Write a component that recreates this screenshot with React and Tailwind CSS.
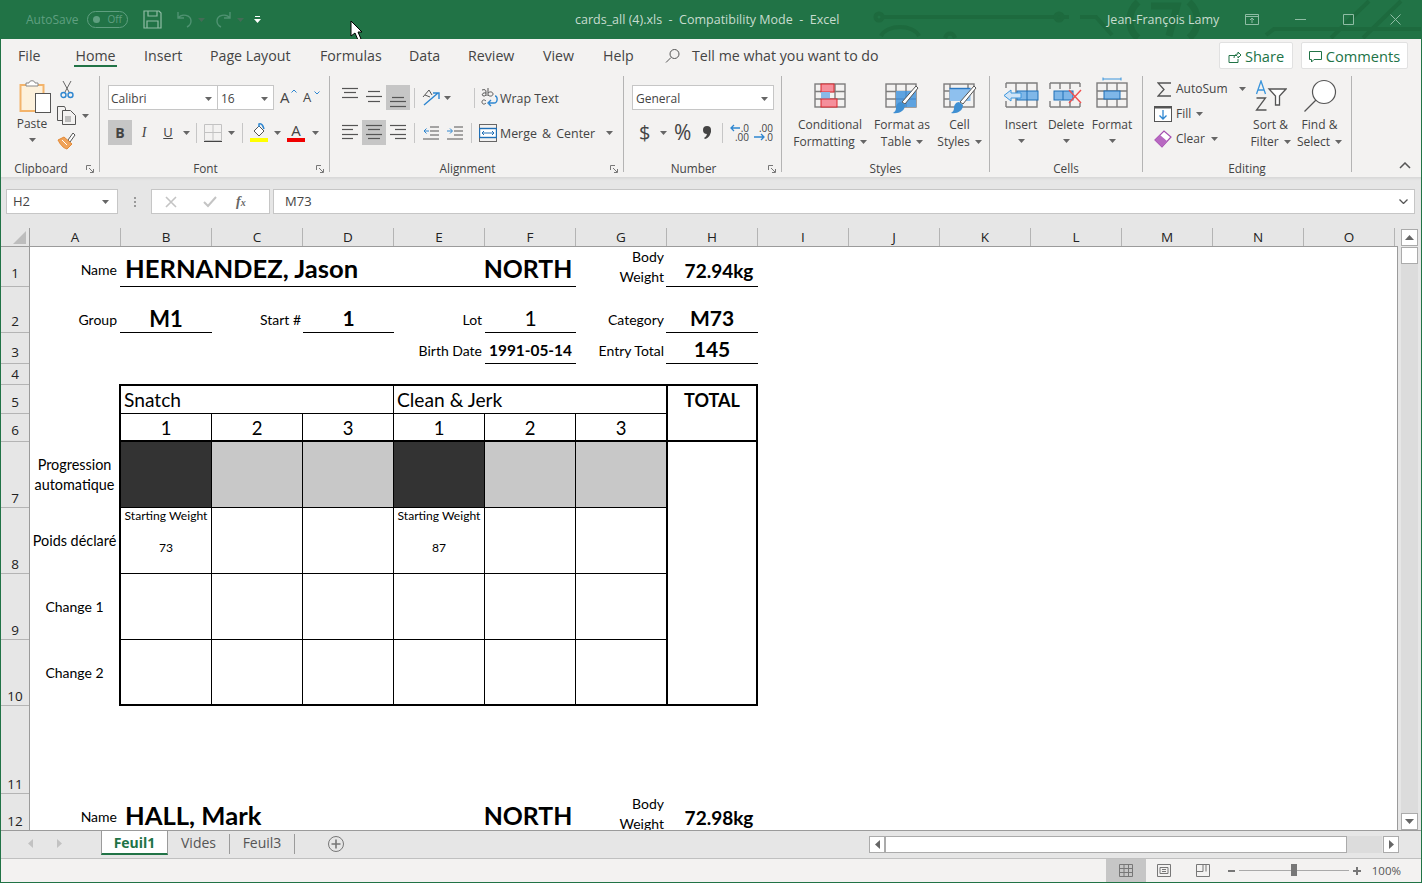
import React from 'react'

// small dropdown triangle used all over the ribbon
function Caret({ className = '' }) {
  return (
    <svg width="7" height="4" viewBox="0 0 7 4" className={'shrink-0 ' + className}>
      <path d="M0 0h7L3.5 4z" fill="#666" />
    </svg>
  )
}

function Launcher() {
  return (
    <svg width="8" height="8" viewBox="0 0 8 8">
      <path d="M.5 5V.5H5M3 3l4 4M7.5 4v3.5H4" fill="none" stroke="#777" />
    </svg>
  )
}

function Lines({ lines, w = 16, h = 25 }) {
  return (
    <svg width={w} height={h} viewBox={`0 0 ${w} ${h}`} className="shrink-0">
      {lines.map(([a, b, y], i) => (
        <path key={i} d={`M${a} ${y + 0.5}H${b}`} stroke="#555" strokeWidth="1.2" />
      ))}
    </svg>
  )
}

function Group({ width, label, launcher, children }) {
  return (
    <div className={'mt-1 h-[96px] flex flex-col border-r border-[#b4b4b4] shrink-0 ' + width}>
      <div className="flex-1 min-h-0 flex">{children}</div>
      <div className={'h-[12px] relative flex justify-center text-[11.8px] leading-[16px] text-[#444] ' + (launcher ? 'pr-[18px]' : '')}>
        {label}
        {launcher && (
          <span className="absolute right-[5px] top-[5px]">
            <Launcher />
          </span>
        )}
      </div>
    </div>
  )
}

// big ribbon button: icon, two text lines
function BigBtn({ icon, top, bottom, w, pt, caretOwnLine }) {
  return (
    <div className={'flex flex-col items-center shrink-0 ' + w}>
      <div className={'h-[41px] flex items-start justify-center ' + pt}>{icon}</div>
      <div className="text-[12px] leading-[17px] text-[#444] whitespace-nowrap mt-[-1px]">{top}</div>
      {caretOwnLine ? (
        <Caret className="mt-[6px]" />
      ) : (
        <div className="text-[12px] leading-[17px] text-[#444] whitespace-nowrap flex items-center gap-[5px]">
          {bottom}
          <Caret />
        </div>
      )}
    </div>
  )
}

function PaintBrush() {
  return (
    <g>
      <path d="M31 3l2 2-13 16-3-2z" fill="#fff" stroke="#555" />
      <path d="M16 19l4 3c0 6-6 9-12 8 2-1 3-3 3-5 0-3 2-6 5-6z" fill="#3f8fd2" />
    </g>
  )
}

function TableGrid() {
  return (
    <g fill="none" stroke="#7d7d7d" strokeWidth="1.4">
      <rect x="1" y="1" width="30" height="23" />
      <path d="M1 8.5h30M1 16h30M11 1v23M21 1v23" />
    </g>
  )
}

function CondFormatIcon() {
  return (
    <svg width="32" height="26" viewBox="0 0 32 26">
      <TableGrid />
      <rect x="7" y="1" width="13" height="8" fill="#f58f9b" stroke="#d9262c" />
      <rect x="7" y="9" width="9" height="7" fill="#8ab9e8" />
      <rect x="7" y="16" width="16" height="8" fill="#f58f9b" stroke="#d9262c" />
    </svg>
  )
}

function FormatTableIcon() {
  return (
    <svg width="34" height="31" viewBox="0 0 34 31">
      <TableGrid />
      <rect x="11" y="8" width="20" height="16" fill="#5ea3e0" />
      <path d="M21 8v16M11 16h20" stroke="#3f82c4" />
      <PaintBrush />
    </svg>
  )
}

function CellStylesIcon() {
  return (
    <svg width="34" height="31" viewBox="0 0 34 31">
      <g fill="none" stroke="#7d7d7d" strokeWidth="1.4">
        <rect x="1" y="1" width="30" height="23" />
        <path d="M1 8h6M25 8h6M1 16h6M7 1v23M25 1v6" />
      </g>
      <rect x="6.5" y="5" width="21" height="13" fill="#8ec0ee" />
      <path d="M6.5 5.500h21" stroke="#2b78c2" strokeWidth="1.4" />
      <PaintBrush />
    </svg>
  )
}

function InsertIcon() {
  return (
    <svg width="36" height="28" viewBox="0 0 36 28">
      <g fill="none" stroke="#7d7d7d" strokeWidth="1.4">
        <path d="M3 2h31v24H3M3 2v5M3 20v6M13 2v24M24 2v24" />
      </g>
      <rect x="14" y="10" width="21" height="9" fill="#7fb7e8" stroke="#1f6fb6" />
      <path d="M24 10v9" stroke="#1f6fb6" />
      <path d="M1 14.5L8 9v3h10v5H8v3z" fill="#cfe4f7" stroke="#3a95dc" />
    </svg>
  )
}

function DeleteIcon() {
  return (
    <svg width="34" height="28" viewBox="0 0 34 28">
      <g fill="none" stroke="#7d7d7d" strokeWidth="1.4">
        <path d="M1 2h30M1 26h30M1 2v6M1 20v6M11 2v6M11 20v6M21 2v6M21 20v6M31 2v4M31 22v4" />
      </g>
      <rect x="5" y="10" width="19" height="9" fill="#7fb7e8" stroke="#1f6fb6" />
      <path d="M14 10v9" stroke="#1f6fb6" />
      <path d="M20 9l12 13M32 9L20 22" stroke="#f0504f" strokeWidth="1.4" />
    </svg>
  )
}

function FormatIcon() {
  return (
    <svg width="32" height="32" viewBox="0 0 32 32">
      <path d="M7 2h18M7 .5v3M25 .5v3" stroke="#3a95dc" fill="none" />
      <g fill="none" stroke="#7d7d7d" strokeWidth="1.4">
        <rect x="1" y="6" width="30" height="24" />
        <path d="M1 14h30M1 22h30M11 6v24M21 6v24" />
      </g>
      <rect x="8" y="14" width="16" height="8" fill="#7fb7e8" stroke="#1f6fb6" />
    </svg>
  )
}

function SortIcon() {
  return (
    <svg width="32" height="32" viewBox="0 0 32 32">
      <path d="M1.5 14L6 1l4.5 13M3 10h6" fill="none" stroke="#3a95dc" strokeWidth="1.3" />
      <path d="M1.5 18h9l-9 12h10" fill="none" stroke="#555" strokeWidth="1.3" />
      <path d="M14 9h17l-6.5 7v9h-4v-9z" fill="#fff" stroke="#555" strokeWidth="1.3" />
    </svg>
  )
}

function FindIcon() {
  return (
    <svg width="34" height="34" viewBox="0 0 34 34">
      <circle cx="21" cy="13" r="11.5" fill="#fff" stroke="#555" strokeWidth="1.2" />
      <path d="M13 21L1.5 32.5" stroke="#555" strokeWidth="1.3" />
    </svg>
  )
}

function TitleBar() {
  return (
    <div className="relative h-[39px] shrink-0 bg-[#217346] overflow-hidden flex items-center text-[12.5px] font-['Open_Sans',sans-serif]">
      {/* faded circuit pattern behind the title */}
      <svg className="absolute left-0 top-0" width="1422" height="39" viewBox="0 0 1422 39" fill="none" stroke="#1d6a3e" strokeWidth="4">
        <circle cx="878" cy="17" r="3.5" />
        <path d="M882 17h186M1079 17h16l16 18" />
        <circle cx="1058" cy="17" r="3.5" />
        <path d="M880 36c6-12 32-12 38 0M944 38c2-6 8-6 10 0" />
        <path d="M1137 2c-11 10-11 27 0 36M1188 2c11 10 11 27 0 36M1150 6h26l-8 30" strokeWidth="7" />
        <path d="M1265 35l8-6h150M1330 38l38-37M1362 38l38-37" />
      </svg>
      <span className="relative ml-[25px] w-[61px] text-[#5f9f80] text-[12px]">AutoSave</span>
      <span className="relative w-[41px] h-[17px] rounded-full border border-[#5f9f80] flex items-center justify-between pl-[5px] pr-[5px] text-[10px] text-[#5f9f80]">
        <span className="w-[7px] h-[7px] rounded-full bg-[#5f9f80]" />
        Off
      </span>
      <svg className="relative ml-[15px]" width="19" height="19" viewBox="0 0 19 19" fill="none" stroke="#8fbca4" strokeWidth="1.2">
        <path d="M1 1h15l2 2v15H1zM5 1v5h9V1M4 18v-7h11v7" />
      </svg>
      <svg className="relative ml-[14px]" width="17" height="17" viewBox="0 0 17 17" fill="none" stroke="#4f9272" strokeWidth="1.4">
        <path d="M2 1v6h6M2 7c4-5 13-3 13 3 0 3-2 5-4 6" />
      </svg>
      <Caret className="relative ml-[5px] opacity-50" />
      <svg className="relative ml-[10px]" width="17" height="17" viewBox="0 0 17 17" fill="none" stroke="#4f9272" strokeWidth="1.4">
        <path d="M15 1v6H9M15 7C11 2 2 4 2 10c0 3 2 5 4 6" />
      </svg>
      <Caret className="relative ml-[5px] opacity-50" />
      <svg className="relative ml-[10px]" width="7" height="8" viewBox="0 0 7 8" fill="#fff">
        <path d="M1 0h5v1H1zM0 3h7L3.5 7z" />
      </svg>
      <span className="relative ml-[314px] w-[300px] whitespace-pre text-[#c7dccf] pt-px">cards_all (4).xls  -  Compatibility Mode  -  Excel</span>
      <span className="relative ml-[232px] text-[#c7dccf] pt-px">Jean-François Lamy</span>
      <svg className="relative ml-[26px]" width="14" height="11" viewBox="0 0 14 11" fill="none" stroke="#8fbca4">
        <path d="M.5.5h13v10H.5zM.5 2.5h13M7 9V4.5M5 6l2-2 2 2" />
      </svg>
      <svg className="relative ml-[36px]" width="11" height="11" viewBox="0 0 11 11" fill="none" stroke="#8fbca4">
        <path d="M0 5.5h11" />
      </svg>
      <svg className="relative ml-[37px]" width="11" height="11" viewBox="0 0 11 11" fill="none" stroke="#8fbca4">
        <path d="M.5.5h10v10H.5z" />
      </svg>
      <svg className="relative ml-[36px]" width="11" height="11" viewBox="0 0 11 11" fill="none" stroke="#8fbca4">
        <path d="M.5.5l10 10M10.5.5l-10 10" />
      </svg>
      {/* mouse pointer */}
      <svg className="absolute left-[349px] top-[20px]" width="13" height="21" viewBox="0 0 13 21">
        <path d="M1 1v15l4-3 3 7 3-1-3-7h4z" fill="#fff" stroke="#000" />
      </svg>
    </div>
  )
}

function MenuTabs() {
  const items = [
    ['Insert', 'w-[66px]'],
    ['Page Layout', 'w-[110px]'],
    ['Formulas', 'w-[89px]'],
    ['Data', 'w-[59px]'],
    ['Review', 'w-[75px]'],
    ['View', 'w-[60px]'],
    ['Help', 'w-[61px]'],
  ]
  return (
    <div className="h-[33px] shrink-0 bg-[#f3f2f1] flex text-[14.2px] text-[#444] leading-[33px]">
      <span className="w-[59px] pl-[17px]">File</span>
      <span className="relative w-[43px] ml-[14px] mr-[27px] text-center">
        Home
        <span className="absolute left-0 right-0 bottom-[5px] h-[2px] bg-[#217346]" />
      </span>
      {items.map(([t, w]) => (
        <span key={t} className={w}>{t}</span>
      ))}
      <span className="flex items-center">
        <svg width="16" height="16" viewBox="0 0 16 16" fill="none" stroke="#555" className="ml-[1px] mr-[11px]">
          <circle cx="9.5" cy="6" r="4.5" />
          <path d="M6 9.5L1 14.5" />
        </svg>
        Tell me what you want to do
      </span>
      <span className="ml-auto mt-[3px] mb-[3px] w-[74px] h-[27px] bg-white border border-[#e1e1e1] rounded-[2px] flex items-center justify-center gap-[4px] text-[#217346] text-[14.6px] leading-none pt-px">
        <svg width="13" height="13" viewBox="0 0 13 13" fill="none" stroke="#217346">
          <path d="M9 5.5H1v7h9V9M6 8c0-3 2-4 4-4V2l3 3-3 3V6" />
        </svg>
        Share
      </span>
      <span className="ml-[8px] mr-[13px] mt-[3px] mb-[3px] w-[107px] h-[27px] bg-white border border-[#e1e1e1] rounded-[2px] flex items-center justify-center gap-[4px] text-[#217346] text-[14.6px] leading-none pt-px">
        <svg width="13" height="13" viewBox="0 0 13 13" fill="none" stroke="#217346">
          <path d="M.5 1.5h12v8H5L2.5 12V9.5h-2z" />
        </svg>
        Comments
      </span>
    </div>
  )
}

function Ribbon() {
  return (
    <div className="h-[105px] shrink-0 bg-[#f3f2f1] flex text-[#444] relative">
      <Group width="w-[99px]" label="Clipboard" launcher>
        <div className="ml-[13px] w-[36px] flex flex-col items-center">
          <svg width="32" height="33" viewBox="0 0 32 33" className="mt-[4px] ml-[5px]">
            <rect x="1.5" y="5" width="23" height="26" fill="#fdf1dc" stroke="#f3b46c" strokeWidth="2" />
            <path d="M7 6V3h3c0-3 6-3 6 0h3v3z" fill="#fff" stroke="#888" />
            <rect x="16.5" y="13.5" width="15" height="19" fill="#fff" stroke="#555" />
          </svg>
          <span className="text-[12px] leading-[17px] mt-[2px]">Paste</span>
          <Caret className="mt-[6px]" />
        </div>
        <div className="ml-[7px] flex flex-col">
          <svg width="14" height="19" viewBox="0 0 14 19" className="ml-[3px] mt-[4px]" fill="none">
            <path d="M3 1l6 11M11 1L5 12" stroke="#666" />
            <circle cx="3.5" cy="15" r="2.5" stroke="#2e86d0" strokeWidth="1.4" />
            <circle cx="10.5" cy="15" r="2.5" stroke="#2e86d0" strokeWidth="1.4" />
          </svg>
          <div className="flex items-center mt-[7px]">
            <svg width="19" height="19" viewBox="0 0 19 19" fill="none" stroke="#555">
              <path d="M5.5 14.5h-5V.5h7l1 2v2" />
              <path d="M5.5 4.5h8l5 5v9h-13z" fill="#f3f2f1" />
              <path d="M8 11h6M8 13h6M8 15h6" stroke="#888" />
            </svg>
            <Caret className="ml-[6px]" />
          </div>
          <svg width="19" height="18" viewBox="0 0 19 18" className="mt-[7px]">
            <path d="M11 8l5-7 2 2-5 7z" fill="#fff" stroke="#555" />
            <path d="M1 8l6-3 8 7-5 5C6 16 3 12 1 8z" fill="#f0a35a" stroke="#e48a35" />
            <path d="M5 8l5 5" stroke="#fff" />
          </svg>
        </div>
      </Group>

      <Group width="w-[230px]" label="Font" launcher>
        <div className="ml-[8px] flex flex-col">
          <div className="flex items-center h-[25px] mt-[9px]">
            <div className="w-[110px] h-full bg-white border border-[#c6c6c6] flex items-center justify-between pl-[2px] pr-[5px] pt-[2px] text-[12px]">
              Calibri
              <Caret />
            </div>
            <div className="w-[56px] h-full bg-white border-y border-r border-[#c6c6c6] flex items-center justify-between pl-[3px] pr-[5px] pt-[2px] text-[12px]">
              16
              <Caret />
            </div>
            <span className="ml-[6px] text-[15px] relative w-[17px]">
              A
              <svg className="absolute right-0 top-[3px]" width="6" height="4" viewBox="0 0 6 4" fill="none" stroke="#2e86d0"><path d="M.5 3.5L3 1l2.500 2.500" /></svg>
            </span>
            <span className="ml-[6px] text-[13px] relative w-[17px]">
              A
              <svg className="absolute right-0 top-[3px]" width="6" height="4" viewBox="0 0 6 4" fill="none" stroke="#2e86d0"><path d="M.5.5L3 3l2.500-2.500" /></svg>
            </span>
          </div>
          <div className="flex items-center h-[25px] mt-[10px]">
            <span className="w-[24px] h-full bg-[#c6c6c6] flex items-center justify-center font-bold text-[14px]">B</span>
            <span className="w-[24px] text-center text-[14px] italic font-['Liberation_Serif',serif]">I</span>
            <span className="w-[24px] text-center text-[13px] underline">U</span>
            <Caret className="ml-[3px]" />
            <span className="w-px h-[20px] ml-[6px] bg-[#c6c6c6]" />
            <svg width="18" height="18" viewBox="0 0 18 18" className="ml-[7px]" fill="none">
              <path d="M.5.5h17v16H.5zM9 .5v16M.5 8.500h17" stroke="#c2c2c2" />
              <path d="M0 17.500h18" stroke="#444" />
            </svg>
            <Caret className="ml-[6px]" />
            <span className="w-px h-[20px] ml-[7px] bg-[#c6c6c6]" />
            <div className="ml-[7px] w-[18px] flex flex-col items-center">
              <svg width="14" height="14" viewBox="0 0 14 14">
                <path d="M2 8l5-5 5 5-5 5z" fill="#fff" stroke="#555" />
                <path d="M7 4V1c3-1 4 2 5 5" fill="none" stroke="#2e86d0" strokeWidth="1.5" />
              </svg>
              <span className="w-[18px] h-[4px] mt-px bg-[#ffff00]" />
            </div>
            <Caret className="ml-[6px]" />
            <div className="ml-[6px] w-[18px] flex flex-col items-center">
              <span className="text-[15px] leading-[14px] h-[15px]">A</span>
              <span className="w-[18px] h-[4px] bg-[#f00000]" />
            </div>
            <Caret className="ml-[7px]" />
          </div>
        </div>
      </Group>

      <Group width="w-[294px]" label="Alignment" launcher>
        <div className="ml-[12px] flex flex-col">
          <div className="flex items-center h-[25px] mt-[9px]">
            <Lines lines={[[0, 16, 3], [2, 14, 7], [0, 16, 12]]} />
            <span className="w-[8px]" />
            <Lines lines={[[2, 14, 6], [0, 16, 11], [2, 14, 16]]} />
            <span className="ml-[4px] w-[24px] h-full bg-[#c6c6c6] flex items-center justify-center">
              <Lines lines={[[2, 14, 12], [0, 16, 16], [0, 16, 21]]} />
            </span>
            <span className="w-px h-[20px] ml-[4px] bg-[#c6c6c6]" />
            <svg width="19" height="18" viewBox="0 0 19 18" fill="none" className="ml-[7px]">
              <path d="M1 8l6-7 3 5M3 6l5 2M10 9l-3 3" stroke="#555" />
              <path d="M2 16L16 4M11 4h6v6" stroke="#2e86d0" strokeWidth="1.4" />
            </svg>
            <Caret className="ml-[3px]" />
            <span className="w-px h-[20px] ml-[23px] bg-[#c6c6c6]" />
            <svg width="18" height="20" viewBox="0 0 18 20" className="ml-[6px]" fill="none">
              <path d="M1 2c3-1 4 0 4 2v4M5 5C1 4 0 8 3 8c1 0 2-1 2-1M7 0v8M7 5c2-2 5-1 5 1s-3 3-5 1M5 13c-2-2-4-1-4 1s2 3 4 1" stroke="#555" />
              <path d="M14 8c3 0 3 7-1 7H8M10 12l-3 3 3 3" stroke="#2e86d0" strokeWidth="1.4" />
            </svg>
            <span className="text-[12.4px] ml-[1px] pt-[3px] whitespace-nowrap">Wrap Text</span>
          </div>
          <div className="flex items-center h-[25px] mt-[10px]">
            <Lines lines={[[0, 16, 5], [0, 11, 9], [0, 16, 14], [0, 11, 18]]} />
            <span className="ml-[4px] w-[24px] h-full bg-[#c6c6c6] flex items-center justify-center">
              <Lines lines={[[0, 16, 5], [2, 14, 9], [0, 16, 14], [2, 14, 18]]} />
            </span>
            <span className="ml-[4px]">
              <Lines lines={[[0, 16, 5], [5, 16, 9], [0, 16, 14], [5, 16, 18]]} />
            </span>
            <span className="w-px h-[20px] ml-[8px] bg-[#c6c6c6]" />
            <svg width="16" height="16" viewBox="0 0 16 16" fill="none" className="ml-[8px]">
              <path d="M7 2h9M7 6h9M7 10h9M0 14h16" stroke="#555" />
              <path d="M6 6H1M3.500 3.500L1 6l2.500 2.500" stroke="#2e86d0" />
            </svg>
            <svg width="16" height="16" viewBox="0 0 16 16" fill="none" className="ml-[8px]">
              <path d="M7 2h9M7 6h9M7 10h9M0 14h16" stroke="#555" />
              <path d="M0 6h5M3 3.500L5.500 6 3 8.500" stroke="#2e86d0" />
            </svg>
            <span className="w-px h-[20px] ml-[8px] bg-[#c6c6c6]" />
            <svg width="18" height="18" viewBox="0 0 18 18" fill="none" className="ml-[7px]">
              <rect x=".5" y=".5" width="17" height="17" stroke="#666" />
              <rect x=".5" y="4.500" width="17" height="9" fill="#fff" stroke="#1f6fb6" strokeWidth="1.4" />
              <path d="M3 9h12M5 7L3 9l2 2M13 7l2 2-2 2" stroke="#1f6fb6" />
            </svg>
            <span className="text-[12.4px] [word-spacing:2px] ml-[3px] pt-[3px] whitespace-nowrap">Merge &amp; Center</span>
            <Caret className="ml-[11px]" />
          </div>
        </div>
      </Group>

      <Group width="w-[158px]" label="Number" launcher>
        <div className="ml-[8px] flex flex-col">
          <div className="w-[142px] h-[25px] mt-[9px] bg-white border border-[#c6c6c6] flex items-center justify-between pl-[3px] pr-[5px] pt-[2px] text-[12px]">
            General
            <Caret />
          </div>
          <div className="flex items-center h-[25px] mt-[10px]">
            <span className="ml-[7px] w-[11px] text-[20px] leading-none text-center">$</span>
            <Caret className="ml-[10px]" />
            <span className="ml-[7px] w-[17px] text-[21px] leading-none text-center">%</span>
            <svg width="10" height="15" viewBox="0 0 10 15" className="ml-[11px]" fill="#444">
              <circle cx="5" cy="5" r="4" />
              <path d="M9 5c0 4-2 8-6 9l-1-1c2-1 3-3 3-5z" />
            </svg>
            <span className="w-px h-[20px] ml-[10px] bg-[#c6c6c6]" />
            <span className="ml-[7px] w-[19px] relative h-[17px] text-[10px] leading-[9px] text-right">
              <svg className="absolute left-0 top-0" width="10" height="8" viewBox="0 0 10 8" fill="none" stroke="#2e86d0" strokeWidth="1.3"><path d="M10 4H1M4 1L1 4l3 3" /></svg>
              .0<br />.00
            </span>
            <span className="ml-[5px] w-[19px] relative h-[17px] text-[10px] leading-[9px] text-right">
              <svg className="absolute left-0 bottom-0" width="12" height="8" viewBox="0 0 12 8" fill="none" stroke="#2e86d0" strokeWidth="1.3"><path d="M0 4h10M7 1l3 3-3 3" /></svg>
              .00<br />.0
            </span>
          </div>
        </div>
      </Group>

      <Group width="w-[208px]" label="Styles">
        <BigBtn w="w-[96px]" pt="pt-[7px]" icon={<CondFormatIcon />} top="Conditional" bottom="Formatting" />
        <BigBtn w="w-[48px]" pt="pt-[7px]" icon={<FormatTableIcon />} top="Format as" bottom="Table" />
        <BigBtn w="w-[64px] pl-[3px]" pt="pt-[7px]" icon={<CellStylesIcon />} top="Cell" bottom="Styles" />
      </Group>

      <Group width="w-[153px]" label="Cells">
        <BigBtn w="w-[54px] ml-[4px]" pt="pt-[5px]" icon={<InsertIcon />} top="Insert" caretOwnLine />
        <BigBtn w="w-[36px]" pt="pt-[5px]" icon={<DeleteIcon />} top="Delete" caretOwnLine />
        <BigBtn w="w-[56px]" pt="pt-[1px]" icon={<FormatIcon />} top="Format" caretOwnLine />
      </Group>

      <Group width="w-[209px]" label="Editing">
        <div className="ml-[11px] w-[93px] flex flex-col text-[12px]">
          <div className="h-[24px] mt-[1px] flex items-center">
            <svg width="15" height="15" viewBox="0 0 15 15" fill="none" className="ml-[3px]" stroke="#555" strokeWidth="1.3">
              <path d="M14 1H1l6 6.500L1 14h13" />
            </svg>
            <span className="ml-[4px]">AutoSum</span>
            <Caret className="ml-[11px]" />
          </div>
          <div className="h-[25px] flex items-center">
            <svg width="18" height="16" viewBox="0 0 18 16" fill="none">
              <rect x=".5" y=".5" width="17" height="15" fill="#fff" stroke="#555" />
              <path d="M.5 1.500h17" stroke="#555" strokeWidth="2" />
              <path d="M9 4v9M5.500 9.500L9 13l3.500-3.500" stroke="#2e86d0" strokeWidth="1.3" />
            </svg>
            <span className="ml-[4px]">Fill</span>
            <Caret className="ml-[5px]" />
          </div>
          <div className="h-[25px] flex items-center">
            <svg width="18" height="18" viewBox="0 0 18 18">
              <path d="M1 10l9-9 7 6-9 10z" fill="#fff" stroke="#a54db0" strokeWidth="1.2" />
              <path d="M1 10l5-5 7 6-5 6z" fill="#b768c1" />
            </svg>
            <span className="ml-[4px]">Clear</span>
            <Caret className="ml-[6px]" />
          </div>
        </div>
        <BigBtn w="w-[47px]" pt="pt-[4px]" icon={<SortIcon />} top="Sort &" bottom="Filter" />
        <BigBtn w="w-[51px]" pt="pt-[3px]" icon={<FindIcon />} top="Find &" bottom="Select" />
      </Group>

      <svg className="absolute right-[10px] bottom-[8px]" width="12" height="7" viewBox="0 0 12 7" fill="none" stroke="#555" strokeWidth="1.5">
        <path d="M1 6l5-5 5 5" />
      </svg>
    </div>
  )
}

function FormulaBar() {
  return (
    <div className="h-[51px] shrink-0 bg-[#e6e6e6] pt-[12px] shadow-[inset_0_3px_2px_-1px_#d9d9d9]">
      <div className="h-[25px] flex text-[13px] text-[#444]">
        <div className="ml-[5px] w-[112px] bg-white border border-[#c6c6c6] flex items-center justify-between pl-[6px] pr-[8px]">
          H2
          <Caret />
        </div>
        <div className="w-[33px] flex flex-col items-center justify-center gap-[2px]">
          <span className="w-[2px] h-[2px] bg-[#999]" />
          <span className="w-[2px] h-[2px] bg-[#999]" />
          <span className="w-[2px] h-[2px] bg-[#999]" />
        </div>
        <div className="w-[119px] bg-white border border-[#c6c6c6] flex items-center">
          <svg width="12" height="12" viewBox="0 0 12 12" className="ml-[13px]" fill="none" stroke="#c4c4c4" strokeWidth="1.6">
            <path d="M1 1l10 10M11 1L1 11" />
          </svg>
          <svg width="14" height="12" viewBox="0 0 14 12" className="ml-[26px]" fill="none" stroke="#c4c4c4" strokeWidth="2">
            <path d="M1 6l4 4 8-9" />
          </svg>
          <span className="ml-[19px] text-[14px] font-bold italic text-[#666] font-['Liberation_Serif',serif]">f<span className="text-[10px]">x</span></span>
        </div>
        <div className="ml-[3px] w-[1142px] bg-white border border-[#c6c6c6] flex items-center justify-between pl-[11px] pr-[6px]">
          M73
          <svg width="9" height="5" viewBox="0 0 9 5" fill="none" stroke="#555" strokeWidth="1.3"><path d="M.5.500l4 4 4-4" /></svg>
        </div>
      </div>
    </div>
  )
}

const columns = ['B', 'C', 'D', 'E', 'F', 'G', 'H', 'I', 'J', 'K', 'L', 'M', 'N', 'O']

function ColumnHeader() {
  return (
    <div className="h-[19px] shrink-0 flex bg-[#e6e6e6] border-b border-[#9b9b9b] text-[13.5px] leading-[18px] text-[#222]">
      <div className="w-[29px] shrink-0 border-r border-[#9b9b9b] flex items-end justify-end pr-[3px] pb-[2px]">
        <svg width="13" height="13" viewBox="0 0 13 13"><path d="M13 0v13H0z" fill="#bdbdbd" /></svg>
      </div>
      <div className="w-[91px] shrink-0 text-center border-r border-[#b4b4b4]">A</div>
      {columns.map((c) => (
        <div key={c} className="w-[91px] shrink-0 text-center border-r border-[#b4b4b4]">{c}</div>
      ))}
    </div>
  )
}

function RowHeader() {
  const rows = [
    [1, 'h-[40px] pb-[4px]'], [2, 'h-[46px] pb-[2px]'], [3, 'h-[31px] pb-[2px]'], [4, 'h-[21px] pb-[1px]'], [5, 'h-[29px] pb-[2px]'], [6, 'h-[28px] pb-[2px]'],
    [7, 'h-[66px]'], [8, 'h-[66px]'], [9, 'h-[66px]'], [10, 'h-[66px]'], [11, 'h-[88px]'], [12, 'h-[40px] pb-[3px]'],
  ]
  return (
    <div className="w-[29px] shrink-0 bg-[#e6e6e6] border-r border-[#9b9b9b] text-[13.5px] text-[#222] overflow-hidden">
      {rows.map(([n, h]) => (
        <div key={n} className={'border-b border-[#b4b4b4] flex items-end justify-center leading-[18px] ' + h}>{n}</div>
      ))}
    </div>
  )
}

const lbl = 'flex items-center justify-end pr-[2px] text-[14px] text-black'
const big = 'flex items-center justify-center font-bold text-black'

function CardHead({ name, weight }) {
  return (
    <>
      <div className={lbl + ' pt-[5px] pr-[1px]'}>Name</div>
      <div className="col-span-4 ml-px border-b flex items-center pl-[5px] pt-[4px] font-bold text-[25.6px] whitespace-nowrap">{name}</div>
      <div className={big + ' border-b text-[24.8px] pt-[4px] pr-[5px]'}>NORTH</div>
      <div className="flex flex-col justify-center items-end pr-[2px] text-[14px] leading-[20px]">
        <span>Body</span>
        <span>Weight</span>
      </div>
      <div className={big + ' border-b text-[19px] pt-[9px] pl-[14px]'}>{weight}</div>
    </>
  )
}

const bodyCols = ['border-l-2 border-r', 'border-r', 'border-r', 'border-r', 'border-r', '']

function Attempts({ label, first, last, size = 'text-[14px]' }) {
  return (
    <>
      <div className={'flex items-center justify-center text-center leading-[20px] ' + size}>{label}</div>
      {bodyCols.map((c, i) => (
        <div key={i} className={c + ' flex flex-col items-center text-[12.1px] leading-[16px] whitespace-nowrap ' + (last ? 'border-b-2' : 'border-b')}>
          {first && (i === 0 || i === 3) && (
            <>
              <span>Starting Weight</span>
              <span className="h-[16px]" />
              <span>{i === 0 ? '73' : '87'}</span>
            </>
          )}
        </div>
      ))}
    </>
  )
}

function Sheet() {
  return (
    <div className="flex-1 min-w-0 overflow-hidden bg-white border-r border-[#9b9b9b] grid grid-cols-[89px_93px_91px_91px_91px_91px_90px_92px] grid-rows-[40px_46px_31px_20px_30px_26px_68px_66px_66px_66px_88px_40px] content-start justify-start text-black font-['Lato',sans-serif]">
      {/* row 1 */}
      <CardHead name="HERNANDEZ, Jason" weight="72.94kg" />

      {/* row 2 */}
      <div className={lbl + ' pt-[18px] pr-[1px]'}>Group</div>
      <div className={big + ' ml-px border-b text-[22px] pt-[17px]'}>M1</div>
      <div className={lbl + ' pt-[18px]'}>Start #</div>
      <div className={big + ' border-b text-[21px] pt-[16px]'}>1</div>
      <div className={lbl + ' pt-[18px] pr-[3px]'}>Lot</div>
      <div className="border-b flex items-center justify-center text-[21px] pt-[16px]">1</div>
      <div className={lbl + ' pt-[18px]'}>Category</div>
      <div className={big + ' border-b text-[21px] pt-[16px]'}>M73</div>

      {/* row 3 */}
      <div />
      <div />
      <div />
      <div />
      <div className={lbl + ' pt-[3px] pr-[3px]'}>Birth Date</div>
      <div className={big + ' border-b text-[15.4px] pt-[5px]'}>1991-05-14</div>
      <div className={lbl + ' pt-[3px]'}>Entry Total</div>
      <div className={big + ' border-b text-[21px] pt-[2px]'}>145</div>

      {/* row 4 */}
      <div className="col-span-8" />

      {/* rows 5 and 6 */}
      <div />
      <div className="col-span-3 border-l-2 border-t-2 border-b border-r flex items-center pl-[3px] text-[19.2px] pt-[2px]">Snatch</div>
      <div className="col-span-3 border-t-2 border-b flex items-center pl-[3px] text-[19.2px] pt-[2px]">Clean &amp; Jerk</div>
      <div className="row-span-2 border-l-2 border-r-2 border-t-2 text-center font-bold text-[18px] leading-[28px]">TOTAL</div>
      <div />
      {bodyCols.map((c, i) => (
        <div key={i} className={c + ' flex items-center justify-center text-[18.5px] pt-[3px]'}>{i % 3 + 1}</div>
      ))}

      {/* row 7 */}
      <div className="flex items-center justify-center text-center text-[14.4px] leading-[20px] pt-[2px]">
        Progression<br />automatique
      </div>
      {bodyCols.map((c, i) => (
        <div key={i} className={c + ' border-t-2 border-b ' + (i % 3 === 0 ? 'bg-[#333333]' : 'bg-[#c8c8c8]')} />
      ))}
      <div className="row-span-4 border-2" />

      {/* rows 8 to 10 */}
      <Attempts label="Poids déclaré" size="text-[14.4px]" first />
      <Attempts label="Change 1" />
      <Attempts label="Change 2" last />

      {/* row 11 */}
      <div className="col-span-8" />

      {/* row 12, cut by the tab bar */}
      <CardHead name="HALL, Mark" weight="72.98kg" />
    </div>
  )
}

function VScroll() {
  return (
    <div className="w-[23px] shrink-0 bg-[#e6e6e6] flex flex-col items-center pt-px">
      <div className="w-[17px] h-[17px] bg-white border border-[#ababab] flex items-center justify-center">
        <svg width="9" height="5" viewBox="0 0 9 5"><path d="M0 5h9L4.500 0z" fill="#666" /></svg>
      </div>
      <div className="w-[17px] h-[17px] bg-white border border-[#ababab] mt-px" />
      <div className="flex-1 w-[17px] bg-[#dcdcdc]" />
      <div className="w-[17px] h-[17px] bg-white border border-[#ababab]  flex items-center justify-center">
        <svg width="9" height="5" viewBox="0 0 9 5"><path d="M0 0h9L4.500 5z" fill="#666" /></svg>
      </div>
    </div>
  )
}

function TabBar() {
  return (
    <div className="h-[28px] shrink-0 bg-[#e6e6e6] border-t border-[#9b9b9b] flex text-[14px] text-[#555] font-['Open_Sans',sans-serif]">
      <svg width="5" height="9" viewBox="0 0 5 9" className="ml-[27px] mt-[8px]"><path d="M5 0v9L0 4.500z" fill="#c2c2c2" /></svg>
      <svg width="5" height="9" viewBox="0 0 5 9" className="ml-[24px] mt-[8px]"><path d="M0 0v9l5-4.500z" fill="#c2c2c2" /></svg>
      <div className="ml-[39px] w-[67px] h-[24px] bg-white border-x border-[#9b9b9b] border-b-2 border-b-[#217346] flex items-center justify-center font-bold text-[#217346]">Feuil1</div>
      <div className="w-[62px] h-[20px] mt-[3px] border-r border-[#9b9b9b] flex items-center justify-center pb-[3px]">Vides</div>
      <div className="w-[65px] h-[20px] mt-[3px] border-r border-[#9b9b9b] flex items-center justify-center pb-[3px]">Feuil3</div>
      <svg width="16" height="16" viewBox="0 0 16 16" className="ml-[33px] mt-[5px]" fill="none" stroke="#777">
        <circle cx="8" cy="8" r="7.500" />
        <path d="M8 3.500v9M3.500 8h9" strokeWidth="1.600" />
      </svg>
      <div className="ml-[525px] mt-[5px] h-[17px] w-[530px] flex">
        <div className="w-[16px] h-[17px] bg-white border border-[#ababab] flex items-center justify-center">
          <svg width="5" height="9" viewBox="0 0 5 9"><path d="M5 0v9L0 4.500z" fill="#666" /></svg>
        </div>
        <div className="w-[462px] h-[17px] bg-white border border-[#ababab]" />
        <div className="w-[35px] bg-[#dcdcdc]" />
        <div className="ml-px w-[16px] h-[17px] bg-white border border-[#ababab] flex items-center justify-center">
          <svg width="5" height="9" viewBox="0 0 5 9"><path d="M0 0v9l5-4.500z" fill="#666" /></svg>
        </div>
      </div>
    </div>
  )
}

function StatusBar() {
  return (
    <div className="h-[24px] shrink-0 bg-[#f3f2f1] border-t border-[#c0c0c0] flex items-center justify-end text-[11.5px] text-[#555] font-['Open_Sans',sans-serif]">
      <div className="w-[40px] h-full bg-[#c6c6c6] flex items-center justify-center">
        <svg width="14" height="13" viewBox="0 0 14 13" fill="none" stroke="#777">
          <path d="M.5.5h13v12H.5zM5 .5v12M9.500.5v12M.5 4.500h13M.5 8.500h13" />
        </svg>
      </div>
      <svg width="14" height="13" viewBox="0 0 14 13" fill="none" stroke="#777" className="ml-[11px]">
        <path d="M.5.500h13v12H.5zM3 3.500h8v6H3zM5 5.500h4M5 7.500h4" />
      </svg>
      <svg width="14" height="13" viewBox="0 0 14 13" fill="none" stroke="#777" className="ml-[25px]">
        <path d="M.5.500h13v12H.5zM.5 7.500h6.500V.5M10 .5v7" />
      </svg>
      <svg width="7" height="2" viewBox="0 0 7 2" className="ml-[18px]"><rect width="7" height="2" fill="#777" /></svg>
      <div className="ml-[4px] w-[110px] h-px bg-[#a9a9a9] relative">
        <span className="absolute left-[52px] top-[-6px] w-[6px] h-[12px] bg-[#777]" />
      </div>
      <svg width="8" height="8" viewBox="0 0 8 8" className="ml-[4px]"><path d="M3 0h2v3h3v2H5v3H3V5H0V3h3z" fill="#777" /></svg>
      <span className="ml-[11px] mr-[20px]">100%</span>
    </div>
  )
}

export default function App() {
  return (
    <div className="w-[1422px] h-[883px] overflow-hidden flex flex-col border-x border-b border-[#217346] bg-[#f3f2f1] font-['Open_Sans',sans-serif]">
      <TitleBar />
      <MenuTabs />
      <Ribbon />
      <FormulaBar />
      <div className="h-[602px] shrink-0 flex bg-[#e6e6e6]">
        <div className="w-[1397px] shrink-0 flex flex-col overflow-hidden">
          <ColumnHeader />
          <div className="flex-1 min-h-0 flex overflow-hidden">
            <RowHeader />
            <Sheet />
          </div>
        </div>
        <VScroll />
      </div>
      <TabBar />
      <StatusBar />
    </div>
  )
}
